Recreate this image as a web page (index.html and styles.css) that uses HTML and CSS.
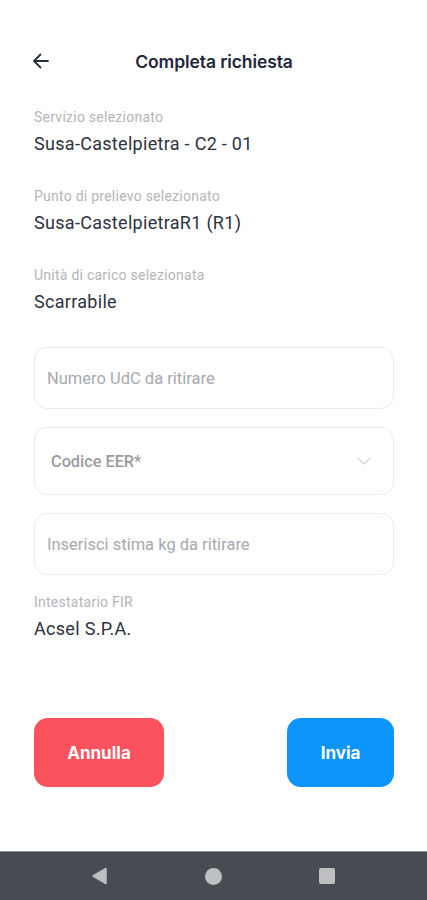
FILE: index.html
```html
<!DOCTYPE html>
<html lang="it">
<head>
<meta charset="utf-8">
<link rel="stylesheet" href="styles.css">
</head>
<body>
<div class="screen">
  <header class="topbar">
    <svg class="back" width="18" height="18" viewBox="0 0 18 18"><path d="M16 9H2.5M8.5 2.5L2 9l6.5 6.5" fill="none" stroke="#2b2f3c" stroke-width="1.8" stroke-linecap="round" stroke-linejoin="round"/></svg>
    <h1 class="title">Completa richiesta</h1>
  </header>
  <main class="content">
    <div class="field">
      <div class="label">Servizio selezionato</div>
      <div class="value">Susa-Castelpietra - C2 - 01</div>
    </div>
    <div class="field">
      <div class="label">Punto di prelievo selezionato</div>
      <div class="value">Susa-CastelpietraR1 (R1)</div>
    </div>
    <div class="field">
      <div class="label">Unità di carico selezionata</div>
      <div class="value">Scarrabile</div>
    </div>
    <div class="inputs">
      <div class="input">Numero UdC da ritirare</div>
      <div class="input select"><span>Codice EER*</span>
        <svg width="14" height="8" viewBox="0 0 14 8"><path d="M1 1l6 6 6-6" fill="none" stroke="#d8d8dc" stroke-width="1.4"/></svg>
      </div>
      <div class="input">Inserisci stima kg da ritirare</div>
    </div>
    <div class="field fir">
      <div class="label">Intestatario FIR</div>
      <div class="value">Acsel S.P.A.</div>
    </div>
    <div class="actions">
      <button class="btn cancel">Annulla</button>
      <button class="btn send">Invia</button>
    </div>
  </main>
  <nav class="navbar">
    <svg width="16" height="18" viewBox="0 0 16 18"><path d="M15 1.5v15L2 9z" fill="#bdbfc1" stroke="#bdbfc1" stroke-width="1.5" stroke-linejoin="round"/></svg>
    <span class="dot"></span>
    <span class="sq"></span>
  </nav>
</div>
</body>
</html>
```
FILE: styles.css
```css
* { box-sizing: border-box; margin: 0; padding: 0; }
html, body { background: #fff; }
body {
  font-family: Roboto, "Liberation Sans", sans-serif;
  width: 427px;
  height: 900px;
  overflow: hidden;
}
.screen {
  height: 900px;
  display: flex;
  flex-direction: column;
}
.topbar {
  position: relative;
  height: 62px;
  margin-top: 30px;
  display: flex;
  align-items: center;
  justify-content: center;
}
.back {
  position: absolute;
  left: 32px;
  top: 22px;
}
.title {
  font-family: Inter, Roboto, sans-serif;
  font-size: 17.5px;
  font-weight: 600;
  color: #22263a;
  letter-spacing: -0.1px;
  margin-left: 1px;
}
.content {
  flex: 1;
  padding: 16px 33px 0 34px;
  display: flex;
  flex-direction: column;
}
.field { height: 79px; }
.label {
  font-size: 14px;
  letter-spacing: 0.25px;
  color: #b4b5b9;
  line-height: 18px;
}
.value {
  margin-top: 7px;
  font-size: 18px;
  letter-spacing: 0.3px;
  color: #2e3140;
  line-height: 22px;
}
.inputs {
  margin-top: 2px;
  display: flex;
  flex-direction: column;
  gap: 18px;
}
.input {
  height: 62px;
  border: 1px solid #ececef;
  border-radius: 13px;
  padding: 0 12px;
  display: flex;
  align-items: center;
  font-size: 16.5px;
  color: #a8a9ae;
}
.input.select {
  height: 68px;
  justify-content: space-between;
  padding: 0 22px 0 16px;
  font-size: 16.3px;
  font-weight: 500;
  color: #9a9ba0;
}
.fir {
  margin-top: 18px;
}
.actions {
  margin-top: 46px;
  display: flex;
  justify-content: space-between;
}
.btn {
  height: 69px;
  border: none;
  border-radius: 14px;
  color: #fff;
  font-family: Inter, Roboto, sans-serif;
  font-size: 17px;
  font-weight: 700;
}
.cancel { width: 130px; background: #fb525e; }
.send { width: 107px; background: #0a94fc; }
.navbar {
  height: 49px;
  background: #464c51;
  border-top: 1px solid #8a9095;
  display: flex;
  align-items: center;
  padding: 0 92px 0 91px;
  justify-content: space-between;
}
.dot {
  width: 17px; height: 17px;
  border-radius: 50%;
  background: #bdbfc1;
}
.sq {
  width: 16px; height: 16px;
  border-radius: 2px;
  background: #bdbfc1;
}
```
